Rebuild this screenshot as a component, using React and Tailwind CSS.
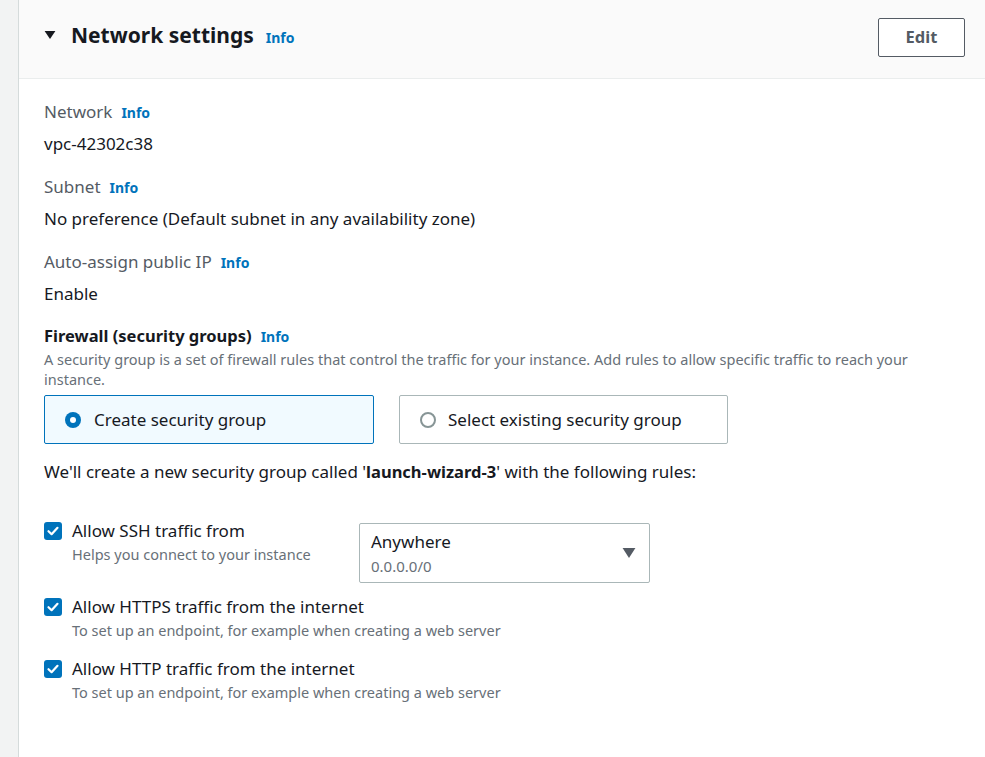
const font = { fontFamily: '"Noto Sans", "Open Sans", Arial, sans-serif' };

function Info() {
  return <span className="ml-[9px] text-[14px] font-bold text-[#0073bb]">Info</span>;
}

function Check() {
  return (
    <span className="mt-[3px] flex h-[18px] w-[18px] shrink-0 items-center justify-center rounded-[3px] bg-[#0073bb]">
      <svg viewBox="0 0 14 14" className="h-[14px] w-[14px]" fill="none">
        <path d="M2.5 7.2 5.6 10.2 11.5 3.8" stroke="#fff" strokeWidth="2.2" strokeLinecap="round" strokeLinejoin="round" />
      </svg>
    </span>
  );
}

function Field({ label, value }) {
  return (
    <div className="mb-[17px]">
      <div className="flex items-baseline text-[17px] leading-[26px] text-[#545b64]">
        {label}
        <Info />
      </div>
      <div className="mt-[5px] text-[17px] leading-[26px] text-[#16191f]">{value}</div>
    </div>
  );
}

function Rule({ title, help, className = '', children }) {
  return (
    <div className={'flex items-start ' + className}>
      <div className={'flex gap-[10px] ' + (children ? 'w-[315px] shrink-0' : '')}>
        <Check />
        <div>
          <div className="text-[17px] leading-[24px] text-[#16191f]">{title}</div>
          <div className="text-[14.5px] leading-[22px] text-[#687078]">{help}</div>
        </div>
      </div>
      {children}
    </div>
  );
}

export default function App() {
  return (
    <div className="flex min-h-[757px] bg-[#f2f3f3]" style={font}>
      <div className="w-[18px] shrink-0" />
      <div className="flex-1 border-l border-[#d5dbdb] bg-white">
        <div className="flex h-[79px] items-center justify-between border-b border-[#eaeded] bg-[#fafafa] pl-[25px] pr-[20px]">
          <div className="flex items-baseline pb-[7px]">
            <svg viewBox="0 0 12 10" className="mr-[15px] h-[9px] w-[12px] self-center">
              <path d="M0 0h12L6 9z" fill="#16191f" />
            </svg>
            <span className="text-[21px] font-bold text-[#16191f]">Network settings</span>
            <span className="ml-[12px] text-[14px] font-bold text-[#0073bb]">Info</span>
          </div>
          <button className="mb-[3px] h-[39px] w-[87px] rounded-[2px] border border-[#545b64] bg-white text-[16.5px] font-bold text-[#545b64]">
            Edit
          </button>
        </div>

        <div className="pl-[25px] pr-[60px] pt-[20px]">
          <Field label="Network" value="vpc-42302c38" />
          <Field label="Subnet" value="No preference (Default subnet in any availability zone)" />
          <Field label="Auto-assign public IP" value="Enable" />

          <div className="mt-[6px] flex items-baseline text-[16.5px] font-bold leading-[24px] text-[#16191f]">
            Firewall (security groups)
            <Info />
          </div>
          <p className="text-[14.5px] leading-[20px] text-[#687078]">
            A security group is a set of firewall rules that control the traffic for your instance. Add rules to allow specific traffic to reach your instance.
          </p>

          <div className="mt-[6px] flex gap-[25px]">
            <div className="flex h-[49px] w-[330px] shrink-0 items-center rounded-[2px] border border-[#0073bb] bg-[#f1faff] pl-[20px]">
              <span className="mr-[13px] flex h-[16px] w-[16px] items-center justify-center rounded-full bg-[#0073bb]">
                <span className="h-[6px] w-[6px] rounded-full bg-white" />
              </span>
              <span className="text-[17px] text-[#16191f]">Create security group</span>
            </div>
            <div className="flex h-[49px] w-[329px] shrink-0 items-center rounded-[2px] border border-[#aab7b8] bg-white pl-[20px]">
              <span className="mr-[12px] h-[16px] w-[16px] rounded-full border-2 border-[#879596]" />
              <span className="text-[17px] text-[#16191f]">Select existing security group</span>
            </div>
          </div>

          <p className="mt-[16px] text-[17px] leading-[24px] text-[#16191f]">
            We'll create a new security group called '<b className="text-[16.5px]">launch-wizard-3</b>' with the following rules:
          </p>

          <div className="mt-[35px] flex flex-col">
            <Rule title="Allow SSH traffic from" help="Helps you connect to your instance" className="mb-[12px]">
              <div className="mt-[4px] flex h-[60px] w-[291px] items-center justify-between rounded-[2px] border border-[#aab7b8] pl-[11px] pr-[13px]">
                <div>
                  <div className="text-[17px] leading-[22px] text-[#16191f]">Anywhere</div>
                  <div className="mt-[3px] text-[15px] leading-[20px] text-[#687078]">0.0.0.0/0</div>
                </div>
                <svg viewBox="0 0 14 12" className="h-[11px] w-[14px]">
                  <path d="M0 0h14L7 11z" fill="#545b64" />
                </svg>
              </div>
            </Rule>
            <Rule title="Allow HTTPS traffic from the internet" help="To set up an endpoint, for example when creating a web server" className="mb-[16px]" />
            <Rule title="Allow HTTP traffic from the internet" help="To set up an endpoint, for example when creating a web server" />
          </div>
        </div>
      </div>
    </div>
  );
}
